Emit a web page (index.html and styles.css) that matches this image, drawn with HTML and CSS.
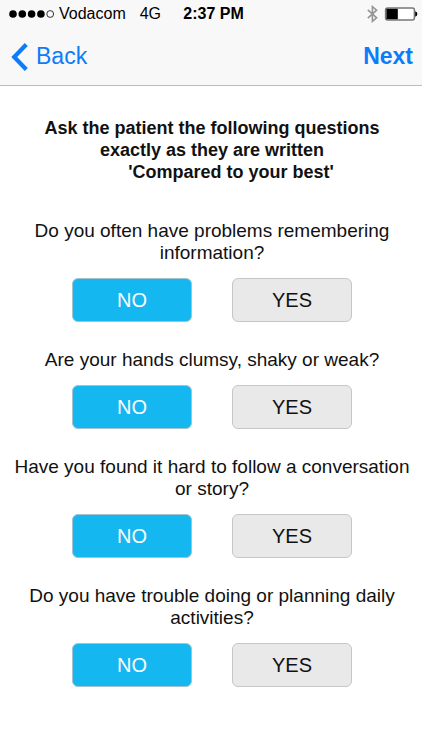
FILE: index.html
```html
<!DOCTYPE html>
<html lang="en">
<head>
  <meta charset="UTF-8" />
  <meta name="viewport" content="width=device-width, initial-scale=1.0"/>
  <title>Patient Questions</title>
  <link rel="stylesheet" href="styles.css">
</head>
<body>

<header>
  <div class="status-bar">
    <div class="carrier">
      <svg class="signal" width="46" height="10" viewBox="0 0 46 10">
        <circle cx="4" cy="5" r="3.8"/>
        <circle cx="13.3" cy="5" r="3.8"/>
        <circle cx="22.6" cy="5" r="3.8"/>
        <circle cx="31.9" cy="5" r="3.8"/>
        <circle cx="41.2" cy="5" r="3.4" fill="none" stroke="#000" stroke-width="0.8"/>
      </svg>
      <span>Vodacom</span>
      <span class="network">4G</span>
    </div>
    <time>2:37 PM</time>
    <div class="indicators">
      <svg width="12" height="18" viewBox="0 0 12 18" fill="none" stroke="#959597" stroke-width="1.6">
        <path d="M1.8 4.8 L10.6 12.8 L6.4 16.4 V1.6 L10.6 5.2 L1.8 13.2"/>
      </svg>
      <svg width="34" height="14" viewBox="0 0 34 14">
        <rect x="1.6" y="0.9" width="28.8" height="12.2" rx="2" fill="#fff" stroke="#777" stroke-width="1.5"/>
        <rect x="2.4" y="1.8" width="11.4" height="10.4"/>
        <path d="M31.2 4.3 Q33.4 5 33.4 7 Q33.4 9 31.2 9.7 Z"/>
      </svg>
    </div>
  </div>
  <nav>
    <a href="#back" class="back">
      <svg width="18" height="28" viewBox="0 0 18 28" fill="none" stroke="#0c7cf9" stroke-width="4.2">
        <path d="M16.3 1.5 L4.2 14 L16.3 26.5"/>
      </svg>
      Back
    </a>
    <a href="#next" class="next">Next</a>
  </nav>
</header>

<main>
  <h1>Ask the patient the following questions<br>exactly as they are written<br><span class="prompt">'Compared to your best'</span></h1>

  <section class="question">
    <p id="q1">Do you often have problems remembering information?</p>
    <div class="answers" role="group" aria-labelledby="q1">
      <button type="button" class="selected" aria-pressed="true">NO</button>
      <button type="button" aria-pressed="false">YES</button>
    </div>
  </section>

  <section class="question">
    <p id="q2">Are your hands clumsy, shaky or weak?</p>
    <div class="answers" role="group" aria-labelledby="q2">
      <button type="button" class="selected" aria-pressed="true">NO</button>
      <button type="button" aria-pressed="false">YES</button>
    </div>
  </section>

  <section class="question">
    <p id="q3">Have you found it hard to follow a conversation or story?</p>
    <div class="answers" role="group" aria-labelledby="q3">
      <button type="button" class="selected" aria-pressed="true">NO</button>
      <button type="button" aria-pressed="false">YES</button>
    </div>
  </section>

  <section class="question">
    <p id="q4">Do you have trouble doing or planning daily activities?</p>
    <div class="answers" role="group" aria-labelledby="q4">
      <button type="button" class="selected" aria-pressed="true">NO</button>
      <button type="button" aria-pressed="false">YES</button>
    </div>
  </section>
</main>

<!-- JavaScript -->
<script>
  document.querySelectorAll(".answers").forEach(group => {
    const buttons = group.querySelectorAll("button");
    buttons.forEach(button => {
      button.addEventListener("click", () => {
        buttons.forEach(b => {
          b.classList.toggle("selected", b === button);
          b.setAttribute("aria-pressed", b === button);
        });
      });
    });
  });
</script>

</body>
</html>
```

FILE: styles.css
```css
body {
  font-family: "Liberation Sans", Arial, sans-serif;
  margin: 0;
  background: #fff;
  color: #111;
}

header {
  background: #f8f8f8;
  border-bottom: 1px solid #bcbcbc;
}

svg {
  display: block;
}

/* Status bar */
.status-bar {
  display: grid;
  grid-template-columns: 1fr auto 1fr;
  align-items: center;
  height: 28px;
  padding: 0 4px 0 9px;
  font-size: 16px;
  color: #000;
}

.carrier, .indicators {
  display: flex;
  align-items: center;
}

.carrier {
  gap: 4px;
}

.network {
  margin-left: 10px;
}

.status-bar time {
  font-weight: bold;
}

.indicators {
  justify-content: flex-end;
  gap: 6px;
}

/* Navigation */
nav {
  display: flex;
  justify-content: space-between;
  align-items: center;
  height: 57px;
  padding: 0 9px 0 10px;
}

nav a {
  color: #0c7cf9;
  font-size: 23px;
  text-decoration: none;
}

.back {
  display: flex;
  align-items: center;
  gap: 8px;
}

.next {
  font-weight: bold;
}

/* Questions */
main {
  padding: 31px 7px 40px 9px;
  text-align: center;
  font-size: 19px;
  line-height: 22px;
}

h1 {
  margin: 0 0 37px;
  font-size: 18px;
  line-height: 22px;
}

.prompt {
  padding-left: 38px;
}

.question {
  margin-bottom: 27px;
}

.question p {
  margin: 0 0 14px;
}

.answers {
  display: flex;
  justify-content: center;
  gap: 40px;
}

.answers button {
  width: 120px;
  height: 44px;
  padding: 0;
  border: 1px solid #c6c6c6;
  border-radius: 6px;
  background: #e9e9e9;
  color: #111;
  font-family: inherit;
  font-size: 20px;
}

.answers .selected {
  background: #15b7f0;
  border-color: #a3c3d0;
  color: #fff;
}
```
